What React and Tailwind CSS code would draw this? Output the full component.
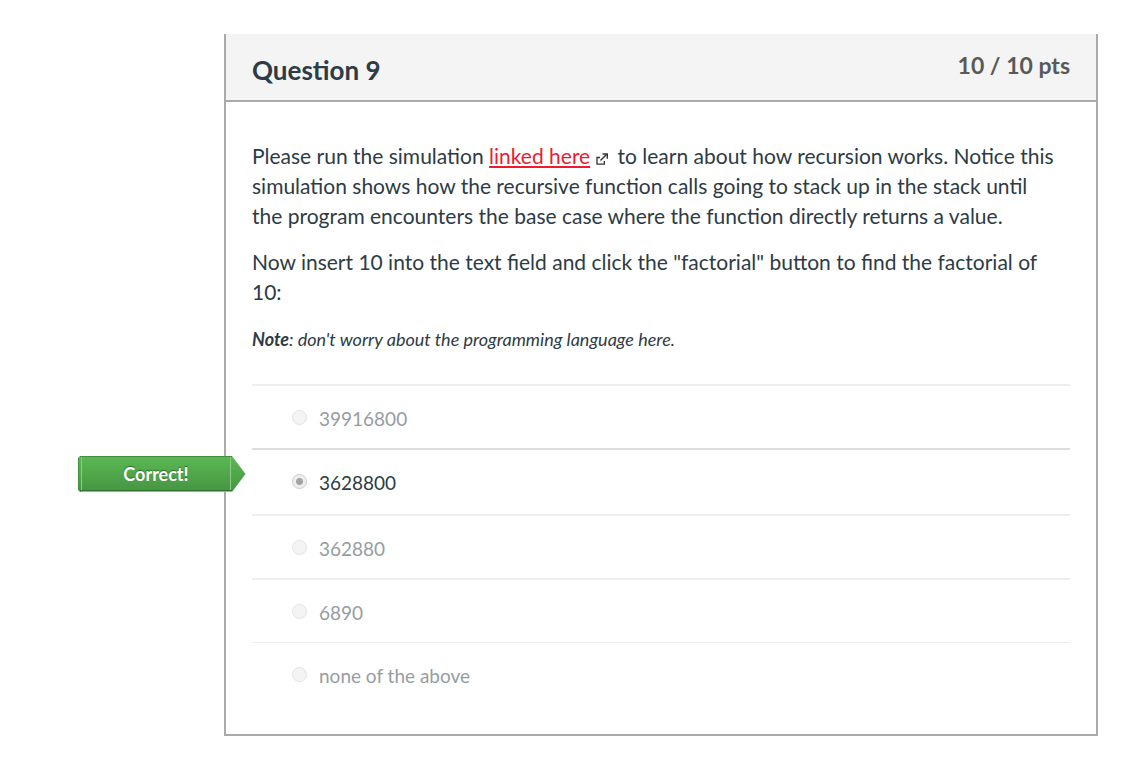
const answers = [
  { id: "a1", text: "39916800" },
  { id: "a2", text: "3628800", selected: true },
  { id: "a3", text: "362880" },
  { id: "a4", text: "6890" },
  { id: "a5", text: "none of the above" },
];

function ExternalIcon() {
  return (
    <svg className="mr-1 ml-1.5 inline-block h-3 w-3 align-[-1px]" viewBox="0 0 12 12" fill="none" stroke="#333333" aria-hidden="true">
      <path d="M4 4.5H1v6.7h7.3V8" strokeWidth="1.3" />
      <path d="M4.5 7.5L10.5 1.5" strokeWidth="1.4" />
      <path d="M6.5 1h4.8v4.8" strokeWidth="1.4" />
    </svg>
  );
}

function CorrectFlag() {
  return (
    <div className="absolute top-1.5 -left-[174px] h-9 w-[168px]">
      <svg className="absolute inset-0 h-full w-full" viewBox="0 0 168 36" aria-hidden="true">
        <defs>
          <linearGradient id="flag" x1="0" y1="0" x2="0" y2="1">
            <stop offset="0" stopColor="#5cb954" />
            <stop offset="1" stopColor="#459442" />
          </linearGradient>
        </defs>
        <path d="M2 0H154L167.5 18L154 36H2L0 34V2Z" fill="url(#flag)" />
        <path d="M2 0.5H154" stroke="#3f8f3d" />
        <path d="M0.5 2V34" stroke="#41903f" />
        <path d="M3.5 1V34M152.5 1V35" stroke="#8dcb88" />
        <path d="M2 34.5H154" stroke="#2f722e" />
        <path d="M3 35.5H154" stroke="#8fbd8d" />
      </svg>
      <span className="relative flex h-full items-center justify-center pr-3 text-lg font-bold text-white [text-shadow:0_-1px_1px_#2f6b2d]">
        Correct!
      </span>
    </div>
  );
}

function Answer({ id, text, selected }) {
  return (
    <div
      className={
        selected
          ? "relative h-[66px] border-t-2 border-[#dddddd]"
          : "relative h-16 border-t-2 border-[#eeeeee] last:border-t"
      }
    >
      {selected && <CorrectFlag />}
      <div className="flex items-start pt-6 pl-10">
        <input
          id={id}
          type="radio"
          name="answer"
          disabled
          defaultChecked={selected}
          className={
            selected
              ? "h-[15px] w-[15px] appearance-none rounded-full border border-[#cccccc] bg-[radial-gradient(circle,#a3a3a3_3px,#eeeeee_4px)]"
              : "h-[15px] w-[15px] appearance-none rounded-full border border-[#e4e4e4] bg-[#f4f4f4]"
          }
        />
        <label
          htmlFor={id}
          className={
            selected
              ? "pl-3 text-[19px] leading-[18px] text-[#2d3b45]"
              : "pl-3 text-[19px] leading-[18px] text-[#969da2]"
          }
        >
          {text}
        </label>
      </div>
    </div>
  );
}

export default function App() {
  return (
    <main className="bg-white pt-[34px] pr-[30px] pb-[22px] pl-56 font-[Lato,sans-serif] text-[#2d3b45]">
      <section className="border-2 border-t-0 border-[#aaaaaa] bg-white">
        <header className="flex items-start justify-between border-b-2 border-[#aaaaaa] bg-[#f4f4f4] px-[26px] pt-4 pb-3">
          <h2 className="pt-0.5 text-[26px] leading-9 font-bold">Question 9</h2>
          <span className="text-[23px] leading-[30px] font-bold text-[#595959]">10 / 10 pts</span>
        </header>
        <div className="px-[26px] pt-[39px] pb-7">
          <div className="text-[21px] leading-[30px]">
            <p className="pr-3">
              Please run the simulation{" "}
              <a href="#simulation" className="text-[#ee1c2e] underline">linked here</a>
              <ExternalIcon /> to learn about how recursion works. Notice this simulation shows how the recursive
              function calls going to stack up in the stack until the program encounters the base case where the
              function directly returns a value.
            </p>
            <p className="mt-4">
              Now insert 10 into the text field and click the "factorial" button to find the factorial of 10:
            </p>
            <p className="mt-4 text-lg leading-8 italic">
              <strong>Note</strong>: don't worry about the programming language here.
            </p>
          </div>
          <fieldset aria-label="Answers" className="mt-[29px]">
            {answers.map((a) => (
              <Answer key={a.id} {...a} />
            ))}
          </fieldset>
        </div>
      </section>
    </main>
  );
}
